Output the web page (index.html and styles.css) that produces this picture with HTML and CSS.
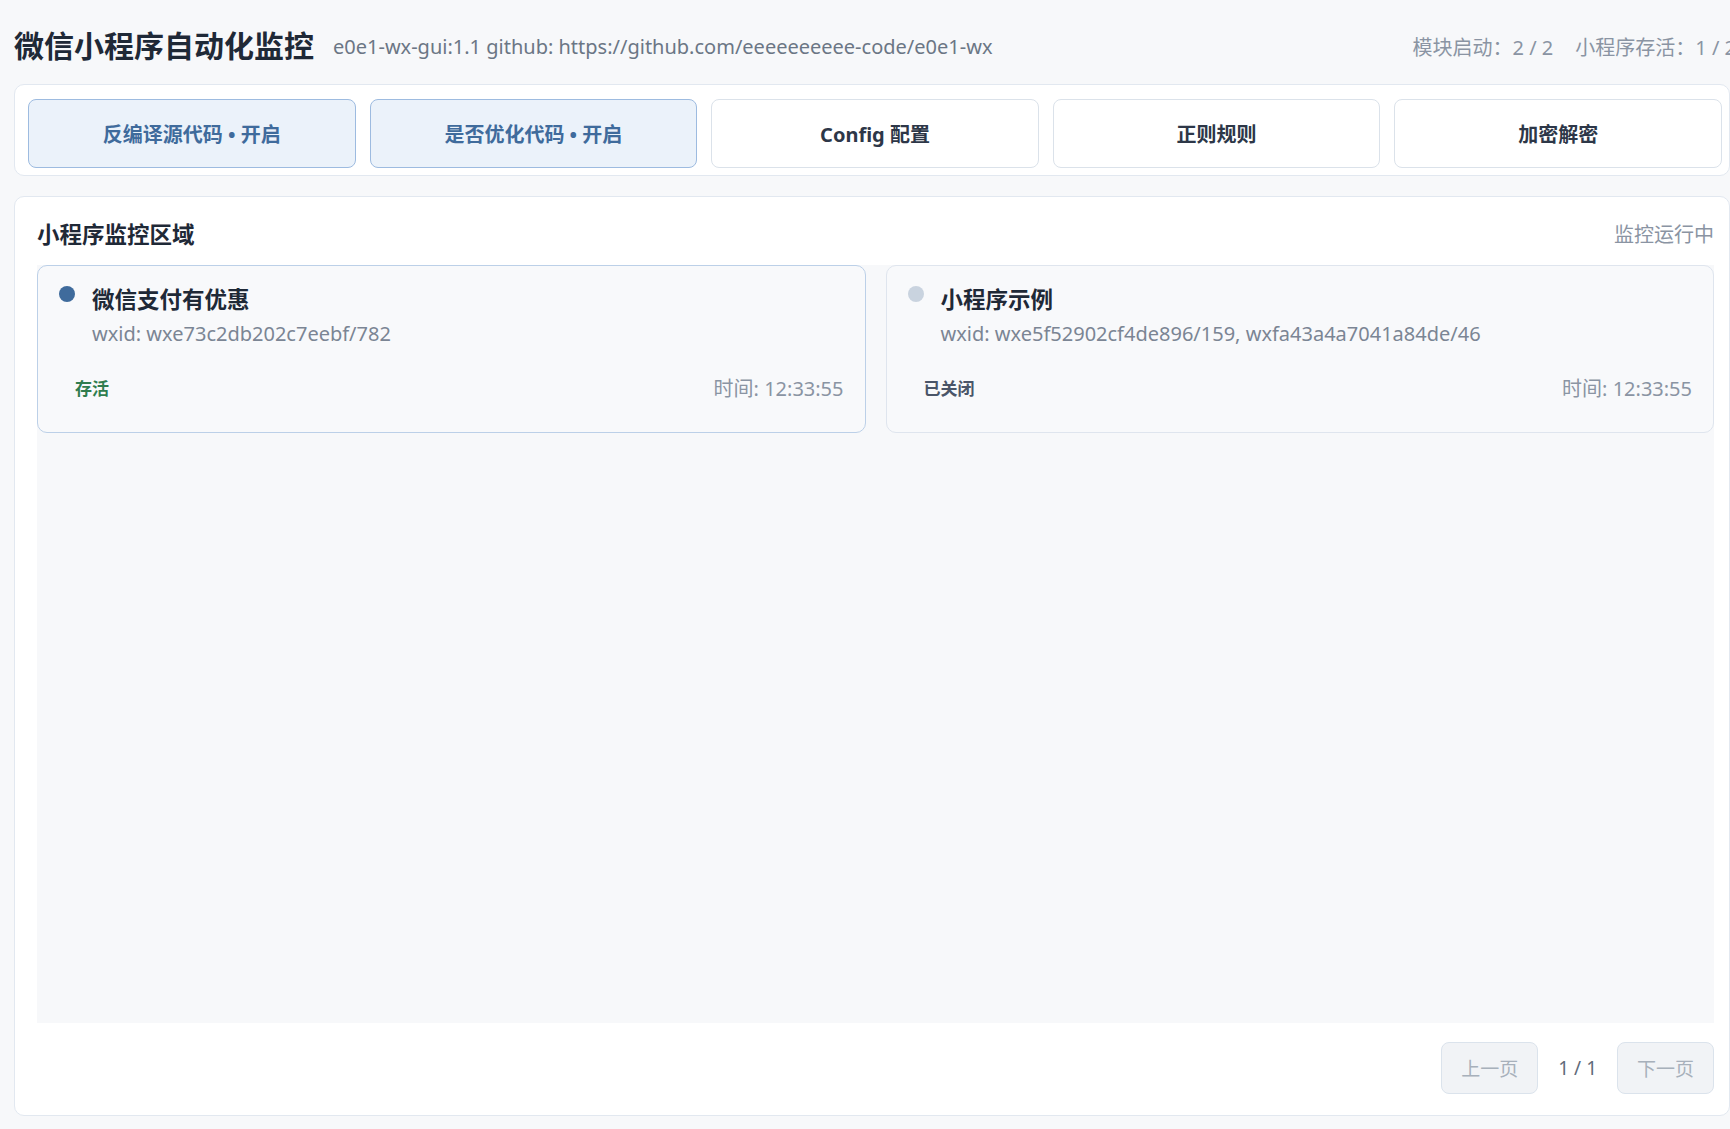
FILE: index.html
```html
<!DOCTYPE html>
<html lang="zh-CN">
<head>
    <meta charset="UTF-8">
    <meta name="viewport" content="width=device-width, initial-scale=1.0">
    <title>微信小程序自动化监控</title>
    <link rel="stylesheet" href="styles.css">
</head>
<body>
    <div class="app">
        <header class="top">
            <h1>微信小程序自动化监控</h1>
            <span class="meta">e0e1-wx-gui:1.1 github: https://github.com/eeeeeeeeee-code/e0e1-wx</span>
            <div class="stats">
                <span>模块启动：2 / 2</span>
                <span>小程序存活：1 / 2</span>
            </div>
        </header>

        <nav class="panel toolbar">
            <button class="tool active">反编译源代码 • 开启</button>
            <button class="tool active">是否优化代码 • 开启</button>
            <button class="tool">Config 配置</button>
            <button class="tool">正则规则</button>
            <button class="tool">加密解密</button>
        </nav>

        <section class="panel monitor">
            <div class="monitor-head">
                <h2>小程序监控区域</h2>
                <span class="state">监控运行中</span>
            </div>

            <div class="mp-list">
                <div class="mp-card alive">
                    <div class="mp-main">
                        <span class="dot"></span>
                        <div>
                            <div class="mp-name">微信支付有优惠</div>
                            <div class="mp-id">wxid: wxe73c2db202c7eebf/782</div>
                        </div>
                    </div>
                    <div class="mp-foot">
                        <span class="status">存活</span>
                        <span class="time">时间: 12:33:55</span>
                    </div>
                </div>
                <div class="mp-card">
                    <div class="mp-main">
                        <span class="dot"></span>
                        <div>
                            <div class="mp-name">小程序示例</div>
                            <div class="mp-id">wxid: wxe5f52902cf4de896/159, wxfa43a4a7041a84de/46</div>
                        </div>
                    </div>
                    <div class="mp-foot">
                        <span class="status">已关闭</span>
                        <span class="time">时间: 12:33:55</span>
                    </div>
                </div>
            </div>

            <div class="pager">
                <button class="page-btn" disabled>上一页</button>
                <span class="page-num">1 / 1</span>
                <button class="page-btn" disabled>下一页</button>
            </div>
        </section>
    </div>
</body>
</html>
```

FILE: styles.css
```css
html, body {
    margin: 0;
    padding: 0;
    overflow: hidden;
}

body {
    font-family: "Noto Sans", "Noto Sans CJK SC", sans-serif;
    background: #f7f8fa;
    color: #1f2937;
}

.app {
    height: 100vh;
    box-sizing: border-box;
    display: flex;
    flex-direction: column;
    padding: 24px 0 13px 14px;
}

.top {
    display: flex;
    align-items: center;
    height: 44px;
    overflow: hidden;
    white-space: nowrap;
}

.top h1 {
    margin: 0 19px 0 0;
    font-size: 30px;
    line-height: 44px;
    font-weight: 700;
    color: #1f2937;
}

.meta {
    font-size: 20px;
    color: #6b7685;
}

.stats {
    margin-left: auto;
    margin-right: -6px;
    display: flex;
    gap: 22px;
    font-size: 20px;
    color: #8a94a3;
}

.panel {
    background: #fff;
    border: 1px solid #e2e8f0;
    border-radius: 10px;
}

.toolbar {
    margin-top: 16px;
    display: grid;
    grid-template-columns: repeat(5, 1fr);
    gap: 14px;
    padding: 14px 7px 7px 13px;
}

.tool {
    height: 69px;
    font-family: inherit;
    font-size: 20px;
    font-weight: 700;
    color: #2d3748;
    background: #fff;
    border: 1px solid #dbe2ea;
    border-radius: 8px;
    cursor: pointer;
}

.tool.active {
    background: #ebf2fa;
    border-color: #9dbbe0;
    color: #3f6b9c;
}

.monitor {
    flex: 1;
    margin-top: 20px;
    display: flex;
    flex-direction: column;
    padding: 21px 15px 21px 22px;
}

.monitor-head {
    display: flex;
    justify-content: space-between;
    align-items: center;
    height: 30px;
    margin-bottom: 17px;
}

.monitor-head h2 {
    margin: 0;
    font-size: 22.5px;
    font-weight: 700;
}

.state {
    font-size: 20px;
    color: #8a94a3;
}

.mp-list {
    flex: 1;
    background: #f7f8fa;
    display: grid;
    grid-template-columns: 1fr 1fr;
    gap: 20px;
    align-content: start;
}

.mp-card {
    background: #f8f9fb;
    border: 1px solid #dfe5ee;
    border-radius: 10px;
    padding: 19px 21px 28px 21px;
}

.mp-card.alive {
    border-color: #bcd0e8;
}

.mp-main {
    display: flex;
    gap: 17px;
}

.dot {
    flex: none;
    width: 16px;
    height: 16px;
    margin-top: 1px;
    border-radius: 50%;
    background: #c9d3df;
}

.alive .dot {
    background: #3f6b9c;
}

.mp-name {
    font-size: 22.5px;
    font-weight: 700;
    line-height: 30px;
}

.mp-id {
    margin-top: 5px;
    font-size: 20px;
    line-height: 28px;
    color: #7b8594;
}

.mp-foot {
    display: flex;
    justify-content: space-between;
    align-items: center;
    margin-top: 26px;
    line-height: 30px;
}

.status {
    padding: 0 16px;
    font-size: 17px;
    font-weight: 700;
    color: #4a5568;
}

.alive .status {
    color: #2f7d4f;
}

.time {
    font-size: 20px;
    color: #8a94a3;
}

.pager {
    display: flex;
    justify-content: flex-end;
    align-items: center;
    gap: 20px;
    margin-top: 19px;
}

.page-btn {
    width: 97px;
    height: 52px;
    font-family: inherit;
    font-size: 19px;
    color: #a7b0bb;
    background: #f1f3f6;
    border: 1px solid #dbe3ec;
    border-radius: 8px;
}

.page-num {
    font-size: 19px;
    color: #5f6b7a;
}
```
